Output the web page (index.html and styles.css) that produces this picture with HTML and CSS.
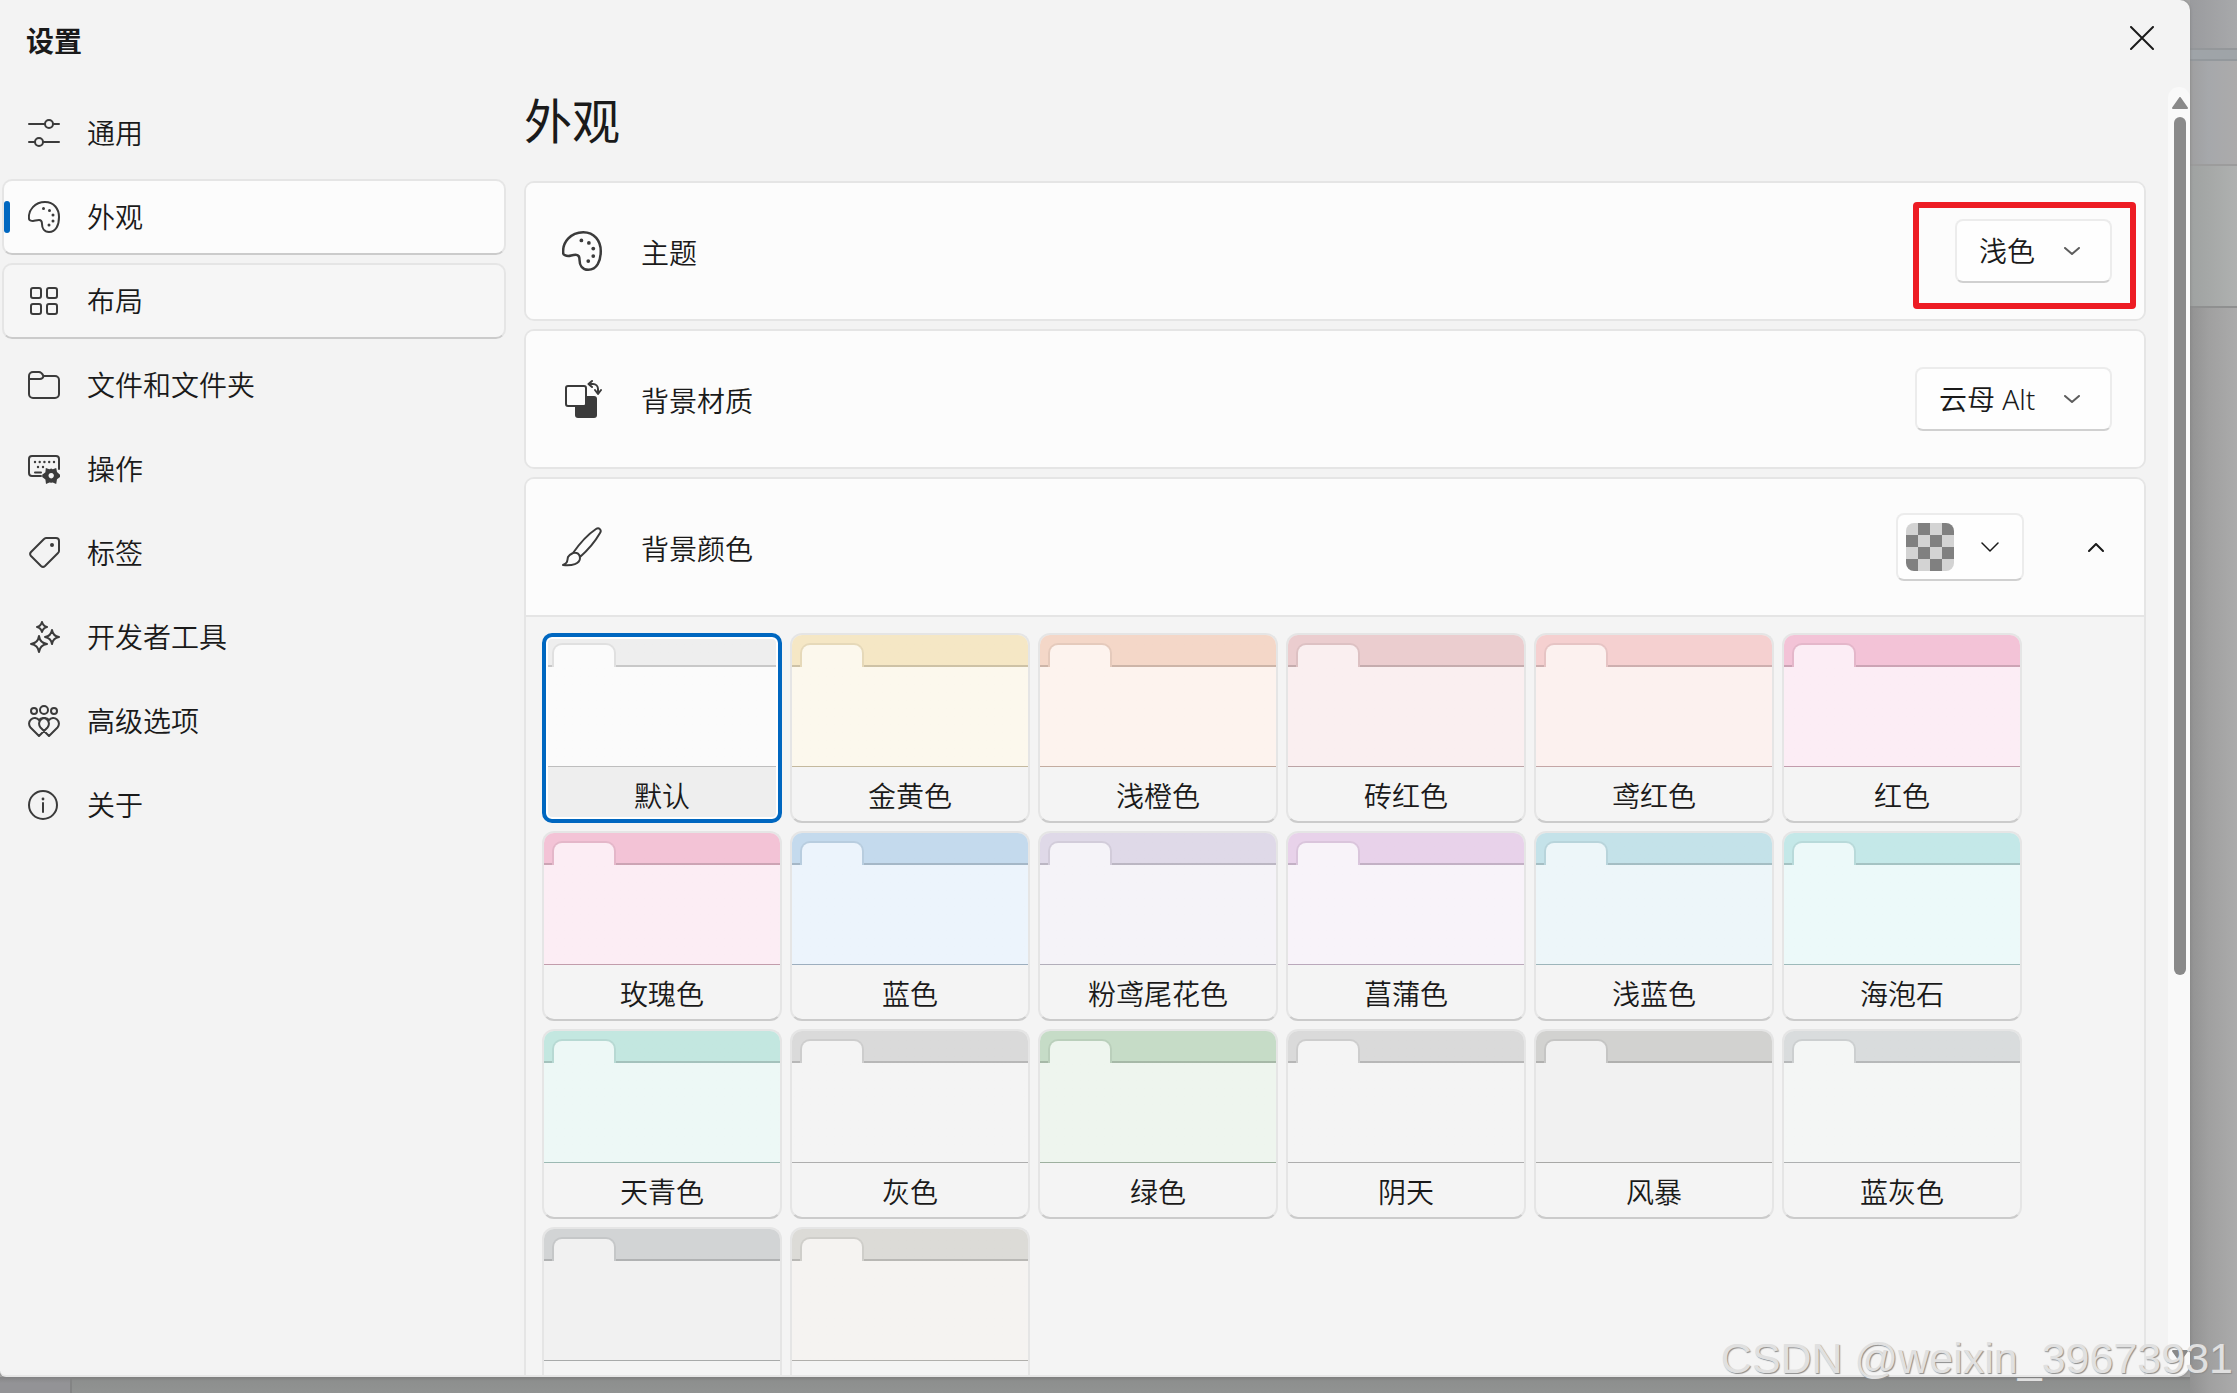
FILE: index.html
```html
<!DOCTYPE html>
<html lang="zh-CN">
<head>
<meta charset="utf-8">
<title>设置</title>
<link rel="stylesheet" href="styles.css">
</head>
<body>
<div class="desktop" aria-hidden="true">
  <div class="strip-toolbar"></div>
  <div class="strip-tabs"></div>
  <div class="strip-address"></div>
  <div class="strip-content"></div>
  <div class="strip-body"></div>
</div>
<div class="desktop-footer" aria-hidden="true"><span class="footer-pane"></span></div>

<div class="window">
  <header class="titlebar">
    <h1 class="window-title">设置</h1>
    <button class="close" type="button" aria-label="关闭"><svg width="24" height="24" viewBox="0 0 24 24"><path d="M1 1 23 23M23 1 1 23"/></svg></button>
  </header>

  <div class="columns">
    <nav class="sidebar">
      <a class="nav-item" href="#general"><svg class="icon" viewBox="0 0 32 32"><path d="M1 7h16M25 7h6M1 25h6M15 25h16"/><circle cx="21" cy="7" r="4"/><circle cx="11" cy="25" r="4"/></svg>通用</a>
      <a class="nav-item selected" href="#appearance" aria-current="page"><svg class="icon" viewBox="0 0 32 32"><use href="#palette"/></svg>外观</a>
      <a class="nav-item hovered" href="#layout"><svg class="icon" viewBox="0 0 32 32"><rect x="3" y="3" width="10" height="10" rx="2"/><rect x="19" y="3" width="10" height="10" rx="2"/><rect x="3" y="19" width="10" height="10" rx="2"/><rect x="19" y="19" width="10" height="10" rx="2"/></svg>布局</a>
      <a class="nav-item" href="#files"><svg class="icon" viewBox="0 0 32 32"><path d="M1 10V7a4 4 0 0 1 4-4h6c2 0 3 1 4.500 4H27a4 4 0 0 1 4 4v14a4 4 0 0 1-4 4H5a4 4 0 0 1-4-4V10h11c2 0 3-1 3.500-3"/></svg>文件和文件夹</a>
      <a class="nav-item" href="#actions"><svg class="icon" viewBox="0 0 32 32"><path d="M13 23H4a3 3 0 0 1-3-3V6a3 3 0 0 1 3-3h24a3 3 0 0 1 3 3v10M7 19.500h6"/><g class="solid"><circle cx="7" cy="9" r="1.200"/><circle cx="11.700" cy="9" r="1.200"/><circle cx="16.400" cy="9" r="1.200"/><circle cx="21.200" cy="9" r="1.200"/><circle cx="26" cy="9" r="1.200"/><circle cx="10" cy="14" r="1.200"/><circle cx="15" cy="14" r="1.200"/></g><path class="solid" fill-rule="evenodd" d="M17.800 15 21.400 16.200 23.200 15.600 24.800 16.200 28.200 15 29 19 32 21.800V24L29 26.200 28.200 31 24.800 29.400 23.200 29.800 21.400 29.400 18 31 17.400 26.400 14.200 24V21.800L17.400 19.200ZM23.200 20a2.700 2.700 0 1 0 .01 0Z"/></svg>操作</a>
      <a class="nav-item" href="#tags"><svg class="icon" viewBox="0 0 32 32"><path d="M18 1h10a3 3 0 0 1 3 3v10a3 3 0 0 1-1 2L17 29a3 3 0 0 1-4 0L3 19a3 3 0 0 1 0-4L16 2a3 3 0 0 1 2-1Z"/><circle class="solid" cx="24" cy="8" r="2"/></svg>标签</a>
      <a class="nav-item" href="#developer"><svg class="icon" viewBox="0 0 32 32"><path d="M14 1q1 4 5 5-4 1-5 5-1-4-5-5 4-1 5-5ZM24 9q1 6 7 7-6 1-7 7-1-6-7-7 6-1 7-7ZM11 15q1 7 8 8-7 1-8 8-1-7-8-8 7-1 8-8Z"/></svg>开发者工具</a>
      <a class="nav-item" href="#advanced"><svg class="icon" viewBox="0 0 32 32"><circle cx="6" cy="6" r="3"/><circle cx="16" cy="5" r="4"/><circle cx="26" cy="6" r="3"/><path d="M11 31 2.500 22.500a5.500 5.500 0 0 1 8.500-7.500 5.500 5.500 0 0 1 8.500 7.500ZM21 31l8.500-8.500A5.500 5.500 0 0 0 21 15a5.500 5.500 0 0 0-8.500 7.500Z"/></svg>高级选项</a>
      <a class="nav-item" href="#about"><svg class="icon" viewBox="0 0 32 32"><circle cx="15" cy="16" r="14"/><path d="M15 14v9"/><circle class="solid" cx="15" cy="10" r="1.400"/></svg>关于</a>
    </nav>

    <main class="page">
      <h2 class="page-title">外观</h2>

      <section class="card">
        <div class="row">
          <svg class="row-icon" viewBox="0 0 32 32"><g id="palette"><path d="M1 18C0 9 7 1 17 1c9 0 14 7 14 15 0 8-3 15-10 15-5 0-7-4-7-8 0-3-1-4-3-4-3 0-4 1-6 1s-4-1-4-2Z"/><g class="solid"><circle cx="15.500" cy="7.500" r="1.500"/><circle cx="21.500" cy="9.500" r="1.500"/><circle cx="25" cy="14" r="1.500"/><circle cx="25" cy="20" r="1.500"/><circle cx="21" cy="24" r="1.500"/></g></g></svg>
          <label class="row-label" for="theme">主题</label>
          <div class="callout"><div class="combo"><select id="theme"><option>浅色</option></select><svg class="chevron" viewBox="0 0 16 8"><path d="m1 1 7 6 7-6"/></svg></div></div>
        </div>
      </section>

      <section class="card">
        <div class="row">
          <svg class="row-icon" viewBox="0 0 40 40"><rect class="solid" x="13" y="17" width="22" height="22" rx="3"/><rect class="paper" x="4" y="7" width="20" height="20" rx="2"/><path d="M27 5h4a5 5 0 0 1 5 5v4M30 2l-3.500 3L30 8M33 11l3 4 3-4"/></svg>
          <label class="row-label" for="backdrop">背景材质</label>
          <div class="combo"><select id="backdrop"><option>云母 Alt</option></select><svg class="chevron" viewBox="0 0 16 8"><path d="m1 1 7 6 7-6"/></svg></div>
        </div>
      </section>

      <section class="card">
        <div class="row expander">
          <svg class="row-icon" viewBox="0 0 40 40"><path d="M11 26C18 16 28 6 34 2c3-2 6 1 4 4-4 7-11 16-20 24M11 26c4-1 7 1 7 5 0 6-8 8-17 7 5-2 4-4 5-8 1-2 3-3 5-4Z"/></svg>
          <span class="row-label">背景颜色</span>
          <button class="color-button" type="button" aria-label="选择背景颜色"><span class="checker"></span><svg class="chevron-wide" viewBox="0 0 18 10"><path d="m1 1 8 8 8-8"/></svg></button>
          <button class="collapse" type="button" aria-label="折叠"><svg viewBox="0 0 16 9"><path d="m1 8 7-7 7 7"/></svg></button>
        </div>
        <div class="swatches">
          <label class="swatch c-default"><input type="radio" name="color" checked><span class="preview"></span><span class="name">默认</span></label>
          <label class="swatch c-gold"><input type="radio" name="color"><span class="preview"></span><span class="name">金黄色</span></label>
          <label class="swatch c-orange"><input type="radio" name="color"><span class="preview"></span><span class="name">浅橙色</span></label>
          <label class="swatch c-brick"><input type="radio" name="color"><span class="preview"></span><span class="name">砖红色</span></label>
          <label class="swatch c-iris"><input type="radio" name="color"><span class="preview"></span><span class="name">鸢红色</span></label>
          <label class="swatch c-red"><input type="radio" name="color"><span class="preview"></span><span class="name">红色</span></label>
          <label class="swatch c-rose"><input type="radio" name="color"><span class="preview"></span><span class="name">玫瑰色</span></label>
          <label class="swatch c-blue"><input type="radio" name="color"><span class="preview"></span><span class="name">蓝色</span></label>
          <label class="swatch c-pastel"><input type="radio" name="color"><span class="preview"></span><span class="name">粉鸢尾花色</span></label>
          <label class="swatch c-calamus"><input type="radio" name="color"><span class="preview"></span><span class="name">菖蒲色</span></label>
          <label class="swatch c-sky"><input type="radio" name="color"><span class="preview"></span><span class="name">浅蓝色</span></label>
          <label class="swatch c-seafoam"><input type="radio" name="color"><span class="preview"></span><span class="name">海泡石</span></label>
          <label class="swatch c-cyan"><input type="radio" name="color"><span class="preview"></span><span class="name">天青色</span></label>
          <label class="swatch c-gray"><input type="radio" name="color"><span class="preview"></span><span class="name">灰色</span></label>
          <label class="swatch c-green"><input type="radio" name="color"><span class="preview"></span><span class="name">绿色</span></label>
          <label class="swatch c-overcast"><input type="radio" name="color"><span class="preview"></span><span class="name">阴天</span></label>
          <label class="swatch c-storm"><input type="radio" name="color"><span class="preview"></span><span class="name">风暴</span></label>
          <label class="swatch c-bluegray"><input type="radio" name="color"><span class="preview"></span><span class="name">蓝灰色</span></label>
          <label class="swatch c-dark"><input type="radio" name="color" aria-label="深灰色"><span class="preview"></span><span class="name"></span></label>
          <label class="swatch c-camo"><input type="radio" name="color" aria-label="迷彩色"><span class="preview"></span><span class="name"></span></label>
        </div>
      </section>
    </main>

    <div class="scrollbar" aria-hidden="true">
      <svg class="arrow" viewBox="0 0 16 12"><path d="M8 1 15 11H1Z"/></svg>
      <div class="track"><div class="thumb"></div></div>
      <svg class="arrow" viewBox="0 0 16 12"><path d="M1 1H15L8 11Z"/></svg>
    </div>
  </div>
</div>
<p class="watermark">CSDN @weixin_39673931</p>
</body>
</html>
```
FILE: styles.css
```css
*, ::before, ::after { box-sizing: border-box; }

body {
  margin: 0;
  height: 100vh;
  overflow: hidden;
  display: grid;
  grid-template-columns: 1fr 47px;
  grid-template-rows: 1fr 16px;
  background: #a6a6a6;
  color: #1a1a1a;
  font: 350 28px/36px "Noto Sans", "Noto Sans CJK SC", sans-serif;
}

/* Dimmed application behind the dialog */
.desktop {
  grid-column: 2;
  grid-row: 1 / 3;
  display: flex;
  flex-direction: column;
  background: linear-gradient(90deg, #929292, #a0a0a0 40%, #ababab);
}
.strip-toolbar { height: 50px; background: linear-gradient(90deg, #9a9b9e, #a8a9ab); border-bottom: 2px solid #94979a; }
.strip-tabs { height: 11px; background: #9fa4a8; border-bottom: 2px solid #93989c; }
.strip-address { height: 105px; background: linear-gradient(90deg, #9f9fa0, #a6a8ab 40%, #acabab); border-bottom: 2px solid #9c9c9c; }
.strip-content { height: 142px; background: linear-gradient(90deg, #9fa2a1, #afb1b0); border-bottom: 2px solid #8f9090; }
.strip-body { flex: 1; }
.desktop-footer {
  grid-column: 1;
  grid-row: 2;
  background: linear-gradient(#7f7f7f, #8d8f8e 4px, #919392);
}
.footer-pane { display: block; width: 72px; height: 16px; background: linear-gradient(#858587, #939396 6px); border-right: 2px solid #838484; }

.window {
  grid-column: 1;
  grid-row: 1;
  z-index: 1;
  min-height: 0;
  overflow: hidden;
  display: flex;
  flex-direction: column;
  background: #f3f3f3;
  border-bottom: 2px solid #e6e6e6;
  border-radius: 0 10px 14px 6px;
  box-shadow: 0 0 3px #7f7f7f;
}

.titlebar { display: flex; justify-content: space-between; height: 85px; flex: none; }
.window-title { margin: 23px 0 0 26px; font-size: 28px; line-height: 36px; font-weight: 700; }

button { font: inherit; color: inherit; padding: 0; border: 0; background: none; }
svg { fill: none; stroke: #3b3b3b; stroke-width: 2; stroke-linecap: round; stroke-linejoin: round; display: block; }
.solid { fill: #3b3b3b; stroke: none; }
.paper { fill: #fcfcfc; }
.close { width: 72px; height: 76px; display: grid; place-items: center; margin-right: 12px; }
.close svg { stroke: #1a1a1a; }

.columns { flex: 1; min-height: 0; display: flex; }

.sidebar { width: 504px; margin: 10px 18px 0 2px; flex: none; display: flex; flex-direction: column; gap: 8px; }
.nav-item {
  position: relative;
  height: 76px;
  display: flex;
  align-items: center;
  gap: 27px;
  padding-left: 24px;
  border: 2px solid transparent;
  border-radius: 10px;
  color: inherit;
  text-decoration: none;
}
.nav-item .icon { width: 32px; height: 32px; }
.selected { background: #fcfcfc; border-color: #e5e5e5; border-bottom-color: #cbcbcb; }
.hovered { background: #f6f6f6; border-color: #e5e5e5; border-bottom-color: #cbcbcb; }
.selected::before {
  content: "";
  position: absolute;
  left: 0;
  top: 20px;
  width: 6px;
  height: 32px;
  border-radius: 3px;
  background: #0067c0;
}

.page { flex: 1; min-width: 0; overflow: hidden; display: flex; flex-direction: column; gap: 8px; }
.page-title { margin: 0 0 16px; font-size: 48px; line-height: 72px; font-weight: 400; flex: none; }
.card { flex: none; border: 2px solid #e5e5e5; border-radius: 10px; background: #f4f4f4; overflow: hidden; }
.row { display: flex; align-items: center; height: 136px; padding: 0 32px 0 36px; background: #fcfcfc; }
.expander { height: 138px; border-bottom: 2px solid #e5e5e5; }
.row-icon { width: 40px; height: 40px; margin-right: 39px; }
.row-label { margin-right: auto; padding-top: 4px; }

.callout { border: 6px solid #ed1c24; border-radius: 4px; padding: 11px 18px 20px 36px; margin: 9px -24px 0 0; }
.combo { position: relative; }
select {
  appearance: none;
  display: block;
  height: 64px;
  padding: 0 74px 0 22px;
  border: 2px solid #ececec;
  border-bottom-color: #d0d0d0;
  border-radius: 8px;
  background: #fefefe;
  color: inherit;
  font: inherit;
}
.chevron { position: absolute; right: 32px; top: 28px; width: 16px; height: 8px; pointer-events: none; stroke: #5d5d5d; }
.color-button {
  width: 128px;
  height: 68px;
  display: flex;
  align-items: center;
  gap: 27px;
  padding: 0 8px;
  border: 2px solid #ececec;
  border-bottom-color: #d0d0d0;
  border-radius: 8px;
  background: #fefefe;
}
.checker { width: 48px; height: 48px; border-radius: 8px; background: conic-gradient(#808080 25%, #d3d3d3 0 50%, #808080 0 75%, #d3d3d3 0) 0 0 / 24px 24px; }
.chevron-wide { width: 18px; height: 10px; stroke: #1a1a1a; stroke-width: 1.500; }
.collapse { width: 64px; height: 64px; margin: 0 -16px 0 40px; display: grid; place-items: center; }
.collapse svg { width: 16px; height: 9px; stroke: #1a1a1a; }

.swatches { display: grid; grid-template-columns: repeat(auto-fill, 240px); gap: 8px; padding: 16px; }
.swatch {
  position: relative;
  height: 190px;
  display: flex;
  flex-direction: column;
  border: 2px solid #e5e5e5;
  border-bottom-color: #cbcbcb;
  border-radius: 12px;
  overflow: hidden;
  background: #f4f4f4;
}
.swatch input { appearance: none; position: absolute; inset: 0; margin: 0; }
.preview {
  height: 132px;
  flex: none;
  padding: 8px 0 0 8px;
  border-bottom: 1px solid;
  border-color: color-mix(in srgb, var(--top) 80%, #000);
  background: linear-gradient(var(--top) 30px, color-mix(in srgb, var(--top) 84%, #000) 30px 32px, var(--body) 32px);
}
.preview::before {
  content: "";
  display: block;
  width: 64px;
  height: 24px;
  border: 2px solid color-mix(in srgb, var(--top) 94%, #000);
  border-bottom: 0;
  border-radius: 10px 10px 0 0;
  background: var(--body);
}
.name { flex: 1; display: grid; place-items: center; padding-top: 3px; }
.swatch:has(:checked) { overflow: visible; background: #eee; border-color: #eee; }
.swatch input:checked { border: 4px solid #0067c0; border-radius: 10px; box-shadow: inset 0 0 0 2px #fff; inset: -2px; z-index: 1; }

.c-default { --top: #eeeeee; --body: #fbfbfb; }
.c-gold { --top: #f5e7c5; --body: #fcf8ed; }
.c-orange { --top: #f4d7c8; --body: #fdf3ee; }
.c-brick { --top: #ebcdcf; --body: #faeff0; }
.c-iris { --top: #f5d0d0; --body: #fcf1ef; }
.c-red { --top: #f3c3d7; --body: #fcedf5; }
.c-rose { --top: #f3c3d6; --body: #fcedf4; }
.c-blue { --top: #c4daed; --body: #ecf4fc; }
.c-pastel { --top: #dfd9e8; --body: #f5f3f8; }
.c-calamus { --top: #e8d2ea; --body: #f8f3f9; }
.c-sky { --top: #c4e2e9; --body: #edf6f9; }
.c-seafoam { --top: #c4e8e8; --body: #ecf9f9; }
.c-cyan { --top: #c3e7e0; --body: #edf8f6; }
.c-gray { --top: #dadada; --body: #f4f4f4; }
.c-green { --top: #c6dcc7; --body: #eef5ee; }
.c-overcast { --top: #dadada; --body: #f4f4f4; }
.c-storm { --top: #d2d2d0; --body: #f1f1f1; }
.c-bluegray { --top: #d9dcdd; --body: #f4f6f5; }
.c-dark { --top: #d2d4d5; --body: #f1f1f1; }
.c-camo { --top: #dcdbd7; --body: #f5f3f1; }

.scrollbar {
  width: 22px;
  margin: 2px 0 0 22px;
  flex: none;
  display: flex;
  flex-direction: column;
  align-items: center;
  gap: 8px;
  padding: 10px 0 13px 2px;
  border-radius: 11px 11px 0 0;
  background: #f9f9f9;
}
.arrow { width: 16px; height: 12px; stroke: #898989; fill: #898989; }
.track { flex: 1; width: 12px; }
.thumb { height: 70%; border-radius: 6px; background: #898989; }

.watermark {
  position: absolute;
  z-index: 2;
  right: 4px;
  bottom: 11px;
  margin: 0;
  font: 400 43px/48px "Liberation Sans", sans-serif;
  color: #e0e0e0;
  text-shadow: 1px 1px 1px #8c8c8c;
}
```
